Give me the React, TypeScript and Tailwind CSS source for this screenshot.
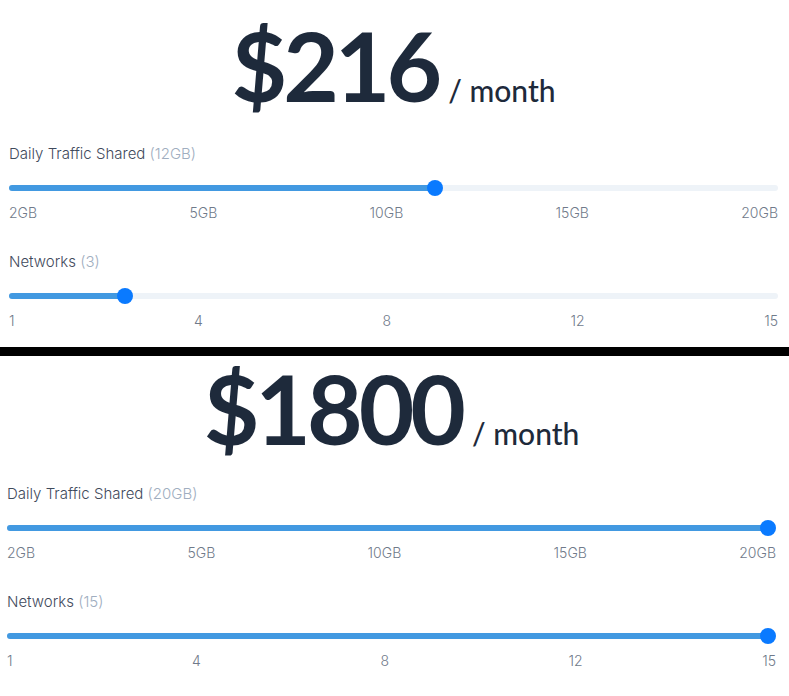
import React from 'react';

type SliderProps = {
  label: string;
  value: string;
  frac: number;
  ticks: string[];
};

function Slider({ label, value, frac, ticks }: SliderProps) {
  return (
    <div>
      <div className="text-[15px] leading-[20px] font-light text-[#3f4a5c]">
        {label} <span className="text-[#a0aec0]">({value})</span>
      </div>
      <div className="relative mt-[21px] h-[6px] rounded-full bg-[#eef3f8]">
        <div
          className="h-full rounded-full bg-[#4299e1]"
          style={{ width: `calc(${frac} * (100% - 16px) + 8px)` }}
        />
        <div
          className="absolute top-1/2 h-4 w-4 -translate-y-1/2 rounded-full bg-[#0a7aff]"
          style={{ left: `calc(${frac} * (100% - 16px))` }}
        />
      </div>
      <div className="mt-3 flex justify-between text-[14px] leading-[20px] font-light text-[#707a8a]">
        {ticks.map((t) => (
          <span key={t}>{t}</span>
        ))}
      </div>
    </div>
  );
}

type PanelProps = {
  price: number;
  traffic: number;
  networks: number;
  top: string;
  gap: string;
  side: string;
};

function Panel({ price, traffic, networks, top, gap, side }: PanelProps) {
  return (
    <div className={`${top} ${side} pb-4`}>
      <div className="flex items-baseline justify-center gap-[10px] text-[#1e2a3b] font-['Lato',sans-serif]">
        <span className="text-[96px] font-bold leading-none tracking-[-4px]">${price}</span>
        <span className="text-[30px] font-medium leading-none">/ month</span>
      </div>
      <div className={`${gap} flex flex-col gap-[29px]`}>
        <Slider
          label="Daily Traffic Shared"
          value={`${traffic}GB`}
          frac={(traffic - 2) / 18}
          ticks={['2GB', '5GB', '10GB', '15GB', '20GB']}
        />
        <Slider
          label="Networks"
          value={`${networks}`}
          frac={(networks - 1) / 14}
          ticks={['1', '4', '8', '12', '15']}
        />
      </div>
    </div>
  );
}

export default function App() {
  return (
    <div className="w-[789px] h-[696px] overflow-hidden bg-white font-['Inter',sans-serif]">
      <Panel price={216} traffic={12} networks={3} top="pt-[17px]" gap="mt-[31px]" side="pl-[9px] pr-[11px]" />
      <div className="h-[9px] bg-black" />
      <Panel price={1800} traffic={20} networks={15} top="pt-1" gap="mt-[28px]" side="pl-[7px] pr-[13px]" />
    </div>
  );
}
